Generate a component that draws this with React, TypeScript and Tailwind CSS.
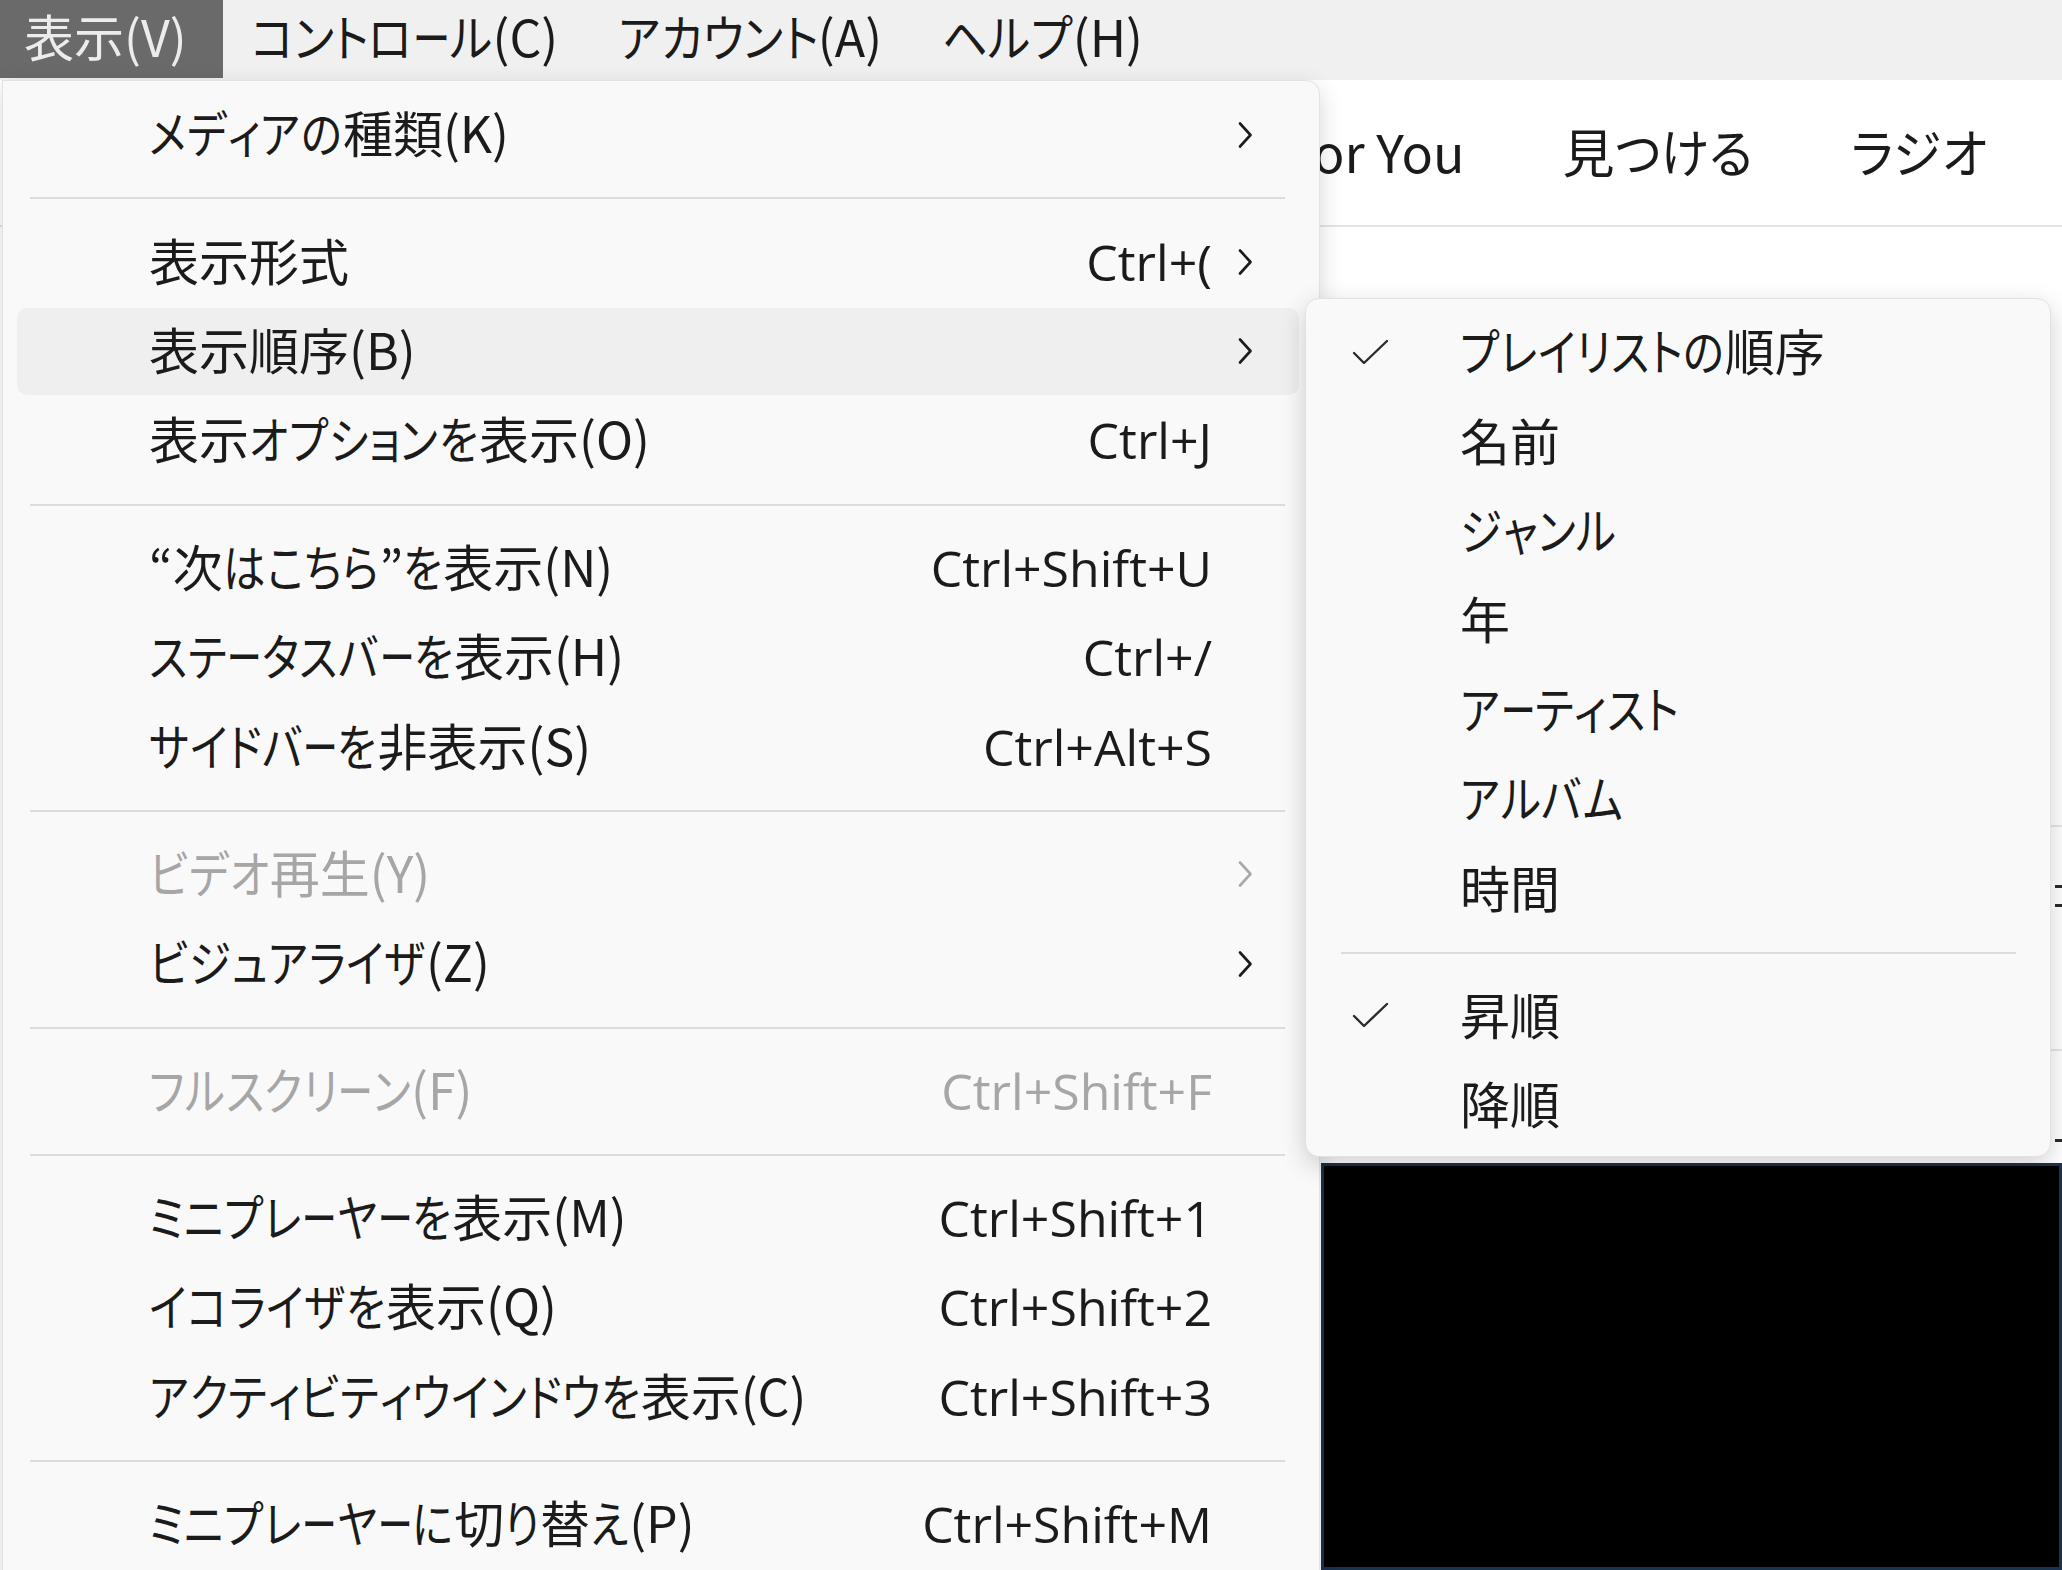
import React from "react";

const JP = "font-['Noto_Sans_CJK_JP',sans-serif] [font-feature-settings:'palt']";
const SC = "font-['Open_Sans','Noto_Sans_CJK_JP',sans-serif]";

type Tight = "menu" | "bar" | "tab";

const kanaCls: Record<Tight, string> = {
  menu: "inline-block origin-left scale-x-[0.85] mr-[-0.12em]",
  bar: "inline-block origin-left scale-x-[0.9] mr-[-0.085em]",
  tab: "inline-block origin-left scale-x-[0.94] mr-[-0.05em]",
};

const dashCls: Record<Tight, string> = {
  menu: "inline-block origin-left scale-x-[0.7] mr-[-0.3em]",
  bar: "inline-block origin-left scale-x-[0.75] mr-[-0.24em]",
  tab: "inline-block origin-left scale-x-[0.94] mr-[-0.05em]",
};

function JText({ text, tight }: { text: string; tight: Tight }) {
  const chars = Array.from(text);
  const out: React.ReactNode[] = [];
  let buf = "";
  chars.forEach((c, i) => {
    if (/[\u3040-\u30ff]/.test(c)) {
      if (buf) {
        out.push(<React.Fragment key={"t" + i}>{buf}</React.Fragment>);
        buf = "";
      }
      out.push(
        <span key={i} className={c === "ー" ? dashCls[tight] : kanaCls[tight]}>
          {c}
        </span>
      );
    } else {
      buf += c;
    }
  });
  if (buf) out.push(<React.Fragment key="end">{buf}</React.Fragment>);
  return <>{out}</>;
}

type MenuEntry =
  | { kind: "sep" }
  | {
      kind: "item";
      label: string;
      shortcut?: string;
      sub?: boolean;
      disabled?: boolean;
      active?: boolean;
    };

const mainItems: MenuEntry[] = [
  { kind: "item", label: "メディアの種類(K)", sub: true },
  { kind: "sep" },
  { kind: "item", label: "表示形式", shortcut: "Ctrl+(", sub: true },
  { kind: "item", label: "表示順序(B)", sub: true, active: true },
  { kind: "item", label: "表示オプションを表示(O)", shortcut: "Ctrl+J" },
  { kind: "sep" },
  { kind: "item", label: "“次はこちら”を表示(N)", shortcut: "Ctrl+Shift+U" },
  { kind: "item", label: "ステータスバーを表示(H)", shortcut: "Ctrl+/" },
  { kind: "item", label: "サイドバーを非表示(S)", shortcut: "Ctrl+Alt+S" },
  { kind: "sep" },
  { kind: "item", label: "ビデオ再生(Y)", sub: true, disabled: true },
  { kind: "item", label: "ビジュアライザ(Z)", sub: true },
  { kind: "sep" },
  { kind: "item", label: "フルスクリーン(F)", shortcut: "Ctrl+Shift+F", disabled: true },
  { kind: "sep" },
  { kind: "item", label: "ミニプレーヤーを表示(M)", shortcut: "Ctrl+Shift+1" },
  { kind: "item", label: "イコライザを表示(Q)", shortcut: "Ctrl+Shift+2" },
  { kind: "item", label: "アクティビティウインドウを表示(C)", shortcut: "Ctrl+Shift+3" },
  { kind: "sep" },
  { kind: "item", label: "ミニプレーヤーに切り替え(P)", shortcut: "Ctrl+Shift+M" },
];

const subItems: { label: string; checked?: boolean }[][] = [
  [
    { label: "プレイリストの順序", checked: true },
    { label: "名前" },
    { label: "ジャンル" },
    { label: "年" },
    { label: "アーティスト" },
    { label: "アルバム" },
    { label: "時間" },
  ],
  [{ label: "昇順", checked: true }, { label: "降順" }],
];

function Chevron({ disabled }: { disabled?: boolean }) {
  return (
    <svg width="18" height="30" viewBox="0 0 18 30" className="block">
      <path
        d="M4 3.5 L14.5 15 L4 26.5"
        fill="none"
        stroke={disabled ? "#a9a9a9" : "#1b1b1b"}
        strokeWidth="2.6"
        strokeLinecap="round"
        strokeLinejoin="round"
      />
    </svg>
  );
}

function Check() {
  return (
    <svg width="38" height="28" viewBox="0 0 38 28" className="block">
      <path
        d="M2 14 L12 24 L35 2"
        fill="none"
        stroke="#2b2b2b"
        strokeWidth="2.4"
        strokeLinecap="round"
        strokeLinejoin="round"
      />
    </svg>
  );
}

function MainMenu() {
  return (
    <div className="absolute left-[2px] top-[80px] w-[1318px] h-[1500px] bg-[#f9f9f9] border border-[#e2e2e2] rounded-tr-[14px] shadow-[0_8px_24px_rgba(0,0,0,0.16)] pt-[9px]">
      {mainItems.map((it, i) =>
        it.kind === "sep" ? (
          <div key={i} className="h-[38px] flex items-center pl-[27px] pr-[34px]">
            <div className="h-[2px] w-full bg-[#dcdcdc]" />
          </div>
        ) : (
          <div key={i} className="h-[89.4px] flex items-center pl-[14px] pr-[20px]">
            <div
              className={`h-[87px] w-full flex items-center rounded-[10px] ${
                it.active ? "bg-[#efefef]" : ""
              }`}
            >
              <div
                className={`flex-1 pl-[132px] pb-[6px] text-[50px] leading-[1.3] whitespace-nowrap ${JP} ${
                  it.disabled ? "text-[#a6a6a6]" : "text-[#1b1b1b]"
                }`}
              >
                <JText text={it.label} tight="menu" />
              </div>
              <div
                className={`text-[50px] leading-[1.3] whitespace-nowrap ${SC} ${
                  it.disabled ? "text-[#a6a6a6]" : "text-[#1b1b1b]"
                }`}
              >
                {it.shortcut ?? ""}
              </div>
              <div className="w-[87px] pl-[24px] flex items-center">
                {it.sub ? <Chevron disabled={it.disabled} /> : null}
              </div>
            </div>
          </div>
        )
      )}
    </div>
  );
}

function SubMenu() {
  return (
    <div className="absolute left-[1305px] top-[298px] w-[746px] h-[859px] bg-[#f9f9f9] border border-[#e2e2e2] rounded-[14px] shadow-[0_8px_26px_rgba(0,0,0,0.18)] pt-[9px]">
      {subItems.map((group, gi) => (
        <React.Fragment key={gi}>
          {gi > 0 && (
            <div className="h-[38px] flex items-center pl-[35px] pr-[34px]">
              <div className="h-[2px] w-full bg-[#dcdcdc]" />
            </div>
          )}
          {group.map((it, i) => (
            <div key={i} className="h-[89.4px] flex items-center">
              <div className="w-[154px] pl-[46px] flex items-center">
                {it.checked ? <Check /> : null}
              </div>
              <div className={`pb-[6px] text-[50px] leading-[1.3] text-[#1b1b1b] whitespace-nowrap ${JP}`}>
                <JText text={it.label} tight="menu" />
              </div>
            </div>
          ))}
        </React.Fragment>
      ))}
    </div>
  );
}

export default function App() {
  const bar = ["表示(V)", "コントロール(C)", "アカウント(A)", "ヘルプ(H)"];
  return (
    <div className="relative w-[2062px] h-[1570px] overflow-hidden bg-white">
      {/* menu bar */}
      <div className="h-[80px] bg-[#f0f0f0] flex items-start">
        {bar.map((b, i) => (
          <div
            key={i}
            className={`h-[78px] flex items-center pb-[8px] text-[50px] leading-[1.3] whitespace-nowrap ${JP} ${
              i === 0
                ? "bg-[#6a6a6a] text-[#ececec] pl-[24px] pr-[36px]"
                : "text-[#1b1b1b] pl-[28px] pr-[32px]"
            }`}
          >
            <span>
              <JText text={b} tight="bar" />
            </span>
          </div>
        ))}
      </div>

      {/* tab bar */}
      <div className="h-[147px] flex items-center pb-[4px] border-b-[2px] border-[#e4e4e4] bg-white">
        <div className="w-[1285px] shrink-0" />
        <div className={`flex items-center gap-[98px] text-[52px] leading-[1.3] text-[#1b1b1b] whitespace-nowrap ${JP}`}>
          <span>For You</span>
          <span>
            <JText text="見つける" tight="tab" />
          </span>
          <span>
            <JText text="ラジオ" tight="tab" />
          </span>
        </div>
      </div>

      {/* content */}
      <div className="flex h-[1343px]">
        <div className="w-[1321px] shrink-0" />
        <div className="flex-1 flex flex-col min-w-0">
          <div className="h-[936px] flex flex-col">
            <div className="h-[598px]" />
            <div className="h-[224px] border-t-[2px] border-[#e6e6e6] pt-[58px] pl-[734px] flex flex-col gap-[16px]">
              <div className="w-[10px] h-[3px] bg-[#2a2a2a]" />
              <div className="w-[10px] h-[3px] bg-[#2a2a2a]" />
            </div>
            <div className="flex-1 border-t-[2px] border-[#e6e6e6] pt-[88px] pl-[734px]">
              <div className="w-[10px] h-[3px] bg-[#2a2a2a]" />
            </div>
          </div>
          <div className="flex-1 bg-black border-[3px] border-[#1d3150]" />
        </div>
      </div>

      <MainMenu />
      <SubMenu />
    </div>
  );
}
